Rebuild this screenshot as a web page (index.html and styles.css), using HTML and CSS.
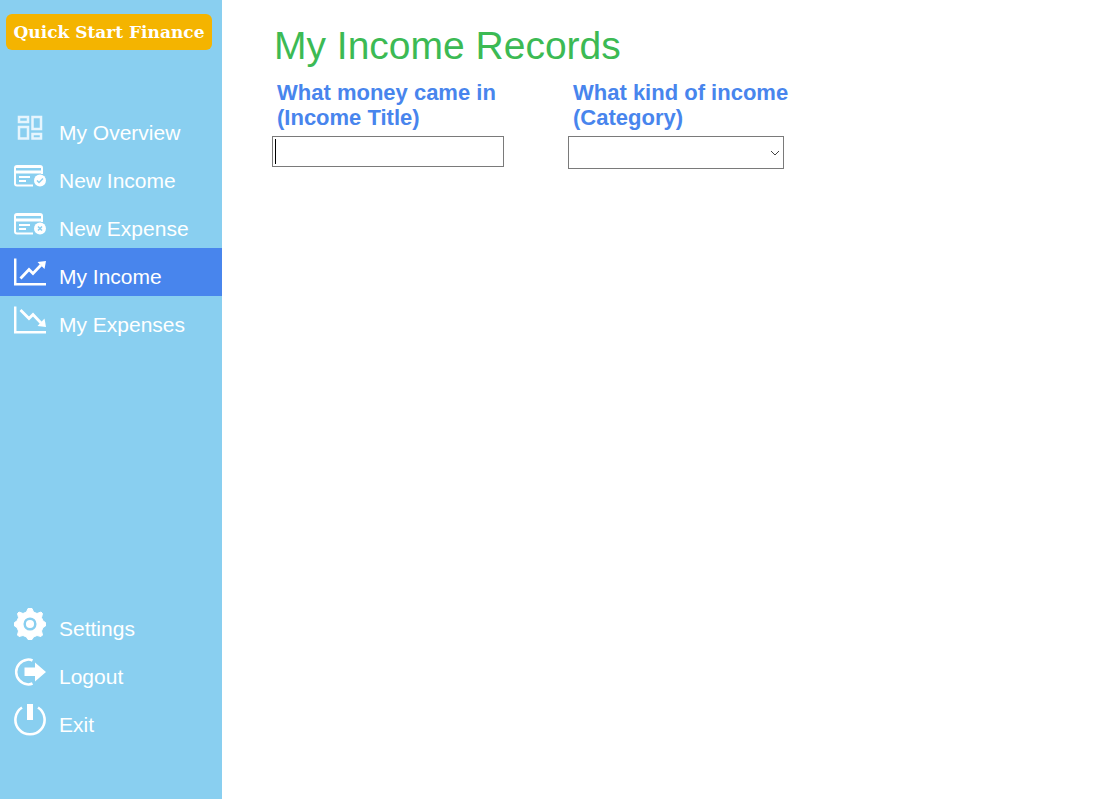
FILE: index.html
```html
<!DOCTYPE html>
<html lang="en">
<head>
<meta charset="utf-8">
<meta name="viewport" content="width=device-width, initial-scale=1">
<title>Quick Start Finance</title>
<link rel="stylesheet" href="styles.css">
</head>
<body class="app">
<aside class="sidebar">
  <div class="brand">Quick Start Finance</div>
  <nav class="menu" aria-label="Main">
    <a class="item" href="#overview">
      <svg class="icon" viewBox="0 0 32 32" fill="none" stroke="#e6f5fd" stroke-width="2.500"><rect x="5" y="5" width="9" height="5"/><rect x="5" y="15" width="9" height="11.500"/><rect x="18.500" y="5" width="8.500" height="12"/><rect x="18.500" y="22" width="8.500" height="4.500"/></svg>
      <span class="text">My Overview</span>
    </a>
    <a class="item" href="#new-income">
      <svg class="icon" viewBox="0 0 32 32" fill="none" stroke="#fff" stroke-width="2"><path d="M19 25.500H3q-2 0-2-2V8q0-2 2-2h23q2 0 2 2v6M1 7h27"/><path d="M1 12H28" stroke-width="3"/><path d="M5 17h11M5 21h7"/><circle cx="26" cy="20.500" r="6" fill="#fff" stroke="none"/><path d="M23 20.500l2 2 4-4" stroke="#89cff0" stroke-width="1.500"/></svg>
      <span class="text">New Income</span>
    </a>
    <a class="item" href="#new-expense">
      <svg class="icon" viewBox="0 0 32 32" fill="none" stroke="#fff" stroke-width="2"><path d="M19 25.500H3q-2 0-2-2V8q0-2 2-2h23q2 0 2 2v6M1 7h27"/><path d="M1 12H28" stroke-width="3"/><path d="M5 17h11M5 21h7"/><circle cx="26" cy="20.500" r="6" fill="#fff" stroke="none"/><path d="M24 18.500l4 4M28 18.500l-4 4" stroke="#89cff0" stroke-width="1.500"/></svg>
      <span class="text">New Expense</span>
    </a>
    <a class="item active" href="#income" aria-current="page">
      <svg class="icon" viewBox="0 0 32 32" fill="none" stroke="#fff" stroke-width="2.500"><path d="M1.200 2.500V28.200H32"/><path d="M6.500 22.500l8.500-9 4 4 8-8.500" stroke-width="2.800"/><path d="M32 5l-8.500 1 7 7z" fill="#fff" stroke="none"/></svg>
      <span class="text">My Income</span>
    </a>
    <a class="item" href="#expenses">
      <svg class="icon" viewBox="0 0 32 32" fill="none" stroke="#fff" stroke-width="2.500"><path d="M1.200 2.500V28.200H32"/><path d="M6.500 6l8.500 8.500 4-4 8 8.500" stroke-width="2.800"/><path d="M32 23l-8.500-1 7-7.500z" fill="#fff" stroke="none"/></svg>
      <span class="text">My Expenses</span>
    </a>
  </nav>
  <nav class="menu account" aria-label="Account">
    <a class="item" href="#settings">
      <svg class="icon" viewBox="0 0 32 32"><path fill="#fff" stroke="#fff" stroke-linejoin="round" d="M14 .5h4l1.500 3.500 3.500 1.500 4-1.500 1.500 1.500-1 4 1.500 3.500 2.500 1.500v3.500L29 19.500 27.500 23l1 4-1.500 1.500-4-1L19.500 29 18 31.500h-4L12.500 29 9 27.500l-4 1L3.500 27l1-4L3 19.500.5 18v-3.500L3 13l1.500-3.500-1-4L5 4l4 1.500L12.500 4z"/><circle cx="16" cy="16" r="5.300" fill="#fff" stroke="#89cff0" stroke-width="2.500"/></svg>
      <span class="text">Settings</span>
    </a>
    <a class="item" href="#logout">
      <svg class="icon" viewBox="0 0 32 32"><path d="M18.500 4.500Q16 3.300 13 3.700A12.400 12.400 0 0 0 13 28.300Q16 28.700 18.500 27.500" fill="none" stroke="#fff" stroke-width="2.500"/><path fill="#fff" d="M10.500 11.500h10.500V6.500l11 9.500-11 9.500v-5.500H10.500z"/></svg>
      <span class="text">Logout</span>
    </a>
    <a class="item" href="#exit">
      <svg class="icon" viewBox="0 0 32 32"><path d="M8 3.500A14.600 14.600 0 1 0 24 3.500" fill="none" stroke="#fff" stroke-width="2.600"/><path fill="#fff" d="M13 0h6v16h-6z"/></svg>
      <span class="text">Exit</span>
    </a>
  </nav>
</aside>
<main class="content">
  <h1 class="title">My Income Records</h1>
  <form class="filters">
    <div class="field">
      <label class="label" for="title">What money came in<br>(Income Title)</label>
      <div class="entry"><input class="box" id="title" type="text"><span class="caret"></span></div>
    </div>
    <div class="field">
      <label class="label" for="category">What kind of income<br>(Category)</label>
      <div class="entry drop">
        <select class="box select" id="category"><option></option></select>
        <svg class="chevron" viewBox="0 0 10 6" fill="none" stroke="#444"><path d="M1 1l4 4 4-4"/></svg>
      </div>
    </div>
  </form>
</main>
</body>
</html>
```
FILE: styles.css
```css
* { box-sizing: border-box; }

.app {
  display: flex;
  min-height: 100vh;
  margin: 0;
  background: #fff;
  font-family: "Liberation Sans", Arial, sans-serif;
}

.sidebar {
  display: flex;
  flex-direction: column;
  flex: 0 0 222px;
  padding: 14px 0 55px;
  background: #89cff0;
}

.brand {
  margin: 0 10px 54px 6px;
  border-radius: 6px;
  background: #f4b400;
  color: #fff;
  font: bold 17px/36px "DejaVu Serif", serif;
  text-align: center;
  white-space: nowrap;
}

.menu { display: flex; flex-direction: column; }
.account { margin-top: auto; padding-top: 24px; }

.item {
  display: flex;
  gap: 13px;
  height: 48px;
  padding: 8px 14px 0;
  color: #fff;
  font-size: 21px;
  line-height: 24px;
  text-decoration: none;
}
.active { background: #4885ed; }
.icon { flex: none; width: 32px; height: 32px; }
.text { padding-top: 9px; white-space: nowrap; }

.content { flex: 1; padding: 22px 50px; }

.title {
  margin: 0 0 10px;
  padding-left: 2px;
  color: #3cba54;
  font-size: 39px;
  font-weight: normal;
  line-height: 48px;
}

.filters { display: flex; flex-wrap: wrap; gap: 64px; }
.field { display: flex; flex-direction: column; gap: 6px; width: 232px; }

.label {
  padding-left: 5px;
  color: #4885ed;
  font-size: 22px;
  font-weight: bold;
  line-height: 25px;
  white-space: nowrap;
}

.entry { position: relative; }
.drop { width: 216px; }

.box {
  display: block;
  width: 100%;
  height: 31px;
  padding: 0 4px;
  border: 1px solid #7a7a7a;
  border-radius: 0;
  background: #fff;
  font: 21px "Liberation Sans", Arial, sans-serif;
}
.select { height: 33px; appearance: none; }

.caret {
  position: absolute;
  top: 3px;
  left: 3px;
  width: 1px;
  height: 25px;
  background: #000;
}

.chevron {
  position: absolute;
  top: 14px;
  right: 4px;
  width: 10px;
  height: 6px;
  pointer-events: none;
}
```
